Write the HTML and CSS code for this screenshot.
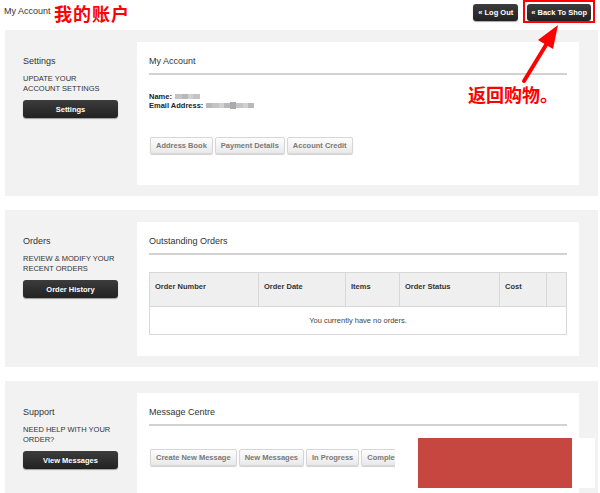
FILE: index.html
```html
<!DOCTYPE html>
<html>
<head>
<meta charset="utf-8">
<link rel="stylesheet" href="styles.css">
</head>
<body>
<div class="topbar">
  <div class="title">My Account</div>
  <div class="top-actions">
    <a class="dark-btn small">« Log Out</a>
    <span class="highlight"><a class="dark-btn small">« Back To Shop</a></span>
  </div>
</div>

<section class="panel">
  <div class="side">
    <div class="side-title">Settings</div>
    <div class="side-desc">UPDATE YOUR<br>ACCOUNT SETTINGS</div>
    <a class="dark-btn">Settings</a>
  </div>
  <div class="card card-1">
    <div class="card-title">My Account</div>
    <div class="details">
      <div class="detail"><b>Name:</b> <span class="blur"><i class="b1"></i><i class="b2"></i><i class="b3"></i><i class="b1"></i></span></div>
      <div class="detail"><b>Email Address:</b> <span class="blur"><i class="b2"></i><i class="b1"></i><i class="b3"></i><i class="b2"></i><i class="b4"></i><i class="b1"></i><i class="b3"></i><i class="b2"></i></span></div>
    </div>
    <div class="btn-row">
      <a class="light-btn">Address Book</a>
      <a class="light-btn">Payment Details</a>
      <a class="light-btn">Account Credit</a>
    </div>
  </div>
</section>

<section class="panel">
  <div class="side">
    <div class="side-title">Orders</div>
    <div class="side-desc">REVIEW &amp; MODIFY YOUR<br>RECENT ORDERS</div>
    <a class="dark-btn">Order History</a>
  </div>
  <div class="card card-2">
    <div class="card-title">Outstanding Orders</div>
    <table class="orders">
      <thead>
        <tr>
          <th class="c1">Order Number</th>
          <th class="c2">Order Date</th>
          <th class="c3">Items</th>
          <th class="c4">Order Status</th>
          <th class="c5">Cost</th>
          <th class="c6"></th>
        </tr>
      </thead>
      <tbody>
        <tr><td colspan="6"><span class="empty">You currently have no orders.</span></td></tr>
      </tbody>
    </table>
  </div>
</section>

<section class="panel last">
  <div class="side">
    <div class="side-title">Support</div>
    <div class="side-desc">NEED HELP WITH YOUR<br>ORDER?</div>
    <a class="dark-btn">View Messages</a>
  </div>
  <div class="card card-3">
    <div class="card-title">Message Centre</div>
    <div class="btn-row msg-row">
      <a class="light-btn">Create New Message</a>
      <a class="light-btn">New Messages</a>
      <a class="light-btn">In Progress</a>
      <a class="light-btn">Completed</a>
    </div>
  </div>
</section>

<div class="note-title">我的账户</div>
<div class="note-shop">返回购物。</div>
<svg class="arrow" width="50" height="64" viewBox="0 0 50 64">
  <line x1="8" y1="58" x2="30" y2="22" stroke="#ff0000" stroke-width="4" stroke-linecap="round"/>
  <polygon points="42,2 22,17 37,26" fill="#ff0000"/>
</svg>
<div class="mask"><div class="mask-red"></div></div>
</body>
</html>
```

FILE: styles.css
```css
* { box-sizing: border-box; }
html, body { margin: 0; padding: 0; background: #fff; }
body {
  width: 600px;
  height: 493px;
  overflow: hidden;
  position: relative;
  font-family: "Liberation Sans", Arial, sans-serif;
  color: #333;
  font-size: 9px;
}
a { text-decoration: none; cursor: pointer; }

.topbar {
  height: 30px;
  display: flex;
  justify-content: space-between;
  align-items: flex-start;
  padding: 0 5px 0 4px;
}
.title {
  font-size: 9px;
  line-height: 11px;
  padding-top: 6px;
  color: #333;
}
.top-actions {
  display: flex;
  align-items: flex-start;
  gap: 5px;
}
.top-actions > .dark-btn { margin-top: 4px; }

.dark-btn {
  display: flex;
  align-items: center;
  justify-content: center;
  width: 95px;
  height: 18px;
  background: linear-gradient(#3c3c3c, #222);
  border-radius: 3px;
  color: #fff;
  font-weight: bold;
  font-size: 7.5px;
  box-shadow: 0 1px 1px rgba(0,0,0,0.35);
}
.dark-btn.small {
  width: auto;
  height: 17px;
  padding: 0 5px;
  font-size: 7.5px;
}
.highlight {
  display: flex;
  border: 2px solid #ff0000;
  padding: 2px 2px 2px 2px;
  height: 23px;
}
.highlight .dark-btn.small { padding: 0 4px; box-shadow: none; }

.panel {
  margin: 0 2px 14px 5px;
  background: #f2f2f2;
  display: flex;
  padding: 12px 19px 11px 18px;
}
.panel.last { margin-bottom: 0; padding-bottom: 0; }

.side {
  width: 95px;
  margin-right: 19px;
  padding-top: 14px;
}
.side-title {
  font-size: 9px;
  line-height: 11px;
  color: #333;
}
.side-desc {
  font-size: 7.5px;
  line-height: 10px;
  margin-top: 7px;
  color: #333;
  white-space: nowrap;
}
.side .dark-btn { margin-top: 6px; }

.card {
  flex: 1;
  background: #fff;
  padding: 14px 12px 0 12px;
}
.card-1 { height: 143px; }
.card-2 { height: 134px; }
.card-3 { height: 110px; }

.card-title {
  font-size: 9px;
  line-height: 11px;
  padding-bottom: 6px;
  border-bottom: 2px solid #d2d2d2;
  color: #333;
}

.details { margin-top: 17px; }
.detail {
  font-size: 7.5px;
  line-height: 9px;
  display: flex;
  align-items: center;
  gap: 3px;
  color: #222;
}
.blur { display: inline-flex; align-items: center; }
.blur i { display: inline-block; height: 5px; }
.blur .b1 { width: 7px; background: #c4c4c4; }
.blur .b2 { width: 6px; background: #b8b8b8; }
.blur .b3 { width: 5px; background: #d0d0d0; }
.blur .b4 { width: 6px; background: #a9a9b0; height: 7px; }

.btn-row {
  display: flex;
  gap: 2px;
  margin-top: 27px;
  padding-left: 1px;
}
.msg-row { margin-top: 23px; }
.light-btn {
  display: flex;
  align-items: center;
  height: 17px;
  padding: 0 5px;
  background: linear-gradient(#fdfdfd, #e9e9e9);
  border: 1px solid #d6d6d6;
  border-radius: 2px;
  box-shadow: 0 1px 1px rgba(0,0,0,0.18);
  color: #7a7a7a;
  font-weight: bold;
  font-size: 7.5px;
  white-space: nowrap;
}

.orders {
  margin-top: 17px;
  width: 100%;
  border-collapse: collapse;
  font-size: 7.5px;
}
.orders th {
  height: 34px;
  background: #efefef;
  border: 1px solid #d8d8d8;
  text-align: left;
  padding: 0 5px 6px 5px;
  font-weight: bold;
  color: #333;
}
.orders .c1 { width: 109px; }
.orders .c2 { width: 87px; }
.orders .c3 { width: 54px; }
.orders .c4 { width: 100px; }
.orders .c5 { width: 47px; }
.orders td {
  height: 28px;
  border: 1px solid #d8d8d8;
  text-align: center;
  padding-bottom: 2px;
}
.empty { color: #444; }

.note-title {
  position: absolute;
  left: 54px;
  top: 3px;
  font-family: "Noto Sans CJK SC", sans-serif;
  font-weight: bold;
  font-size: 18px;
  line-height: 20px;
  color: #ff0000;
  letter-spacing: 1px;
}
.note-shop {
  position: absolute;
  left: 468px;
  top: 84px;
  font-family: "Noto Sans CJK SC", sans-serif;
  font-weight: bold;
  font-size: 18px;
  line-height: 20px;
  color: #ff0000;
}
.arrow {
  position: absolute;
  left: 516px;
  top: 23px;
}
.mask {
  position: absolute;
  left: 395px;
  top: 438px;
  width: 200px;
  height: 50px;
  background: #fff;
}
.mask-red {
  position: absolute;
  left: 23px;
  top: 0;
  width: 154px;
  height: 50px;
  background: #c5473f;
}
```
